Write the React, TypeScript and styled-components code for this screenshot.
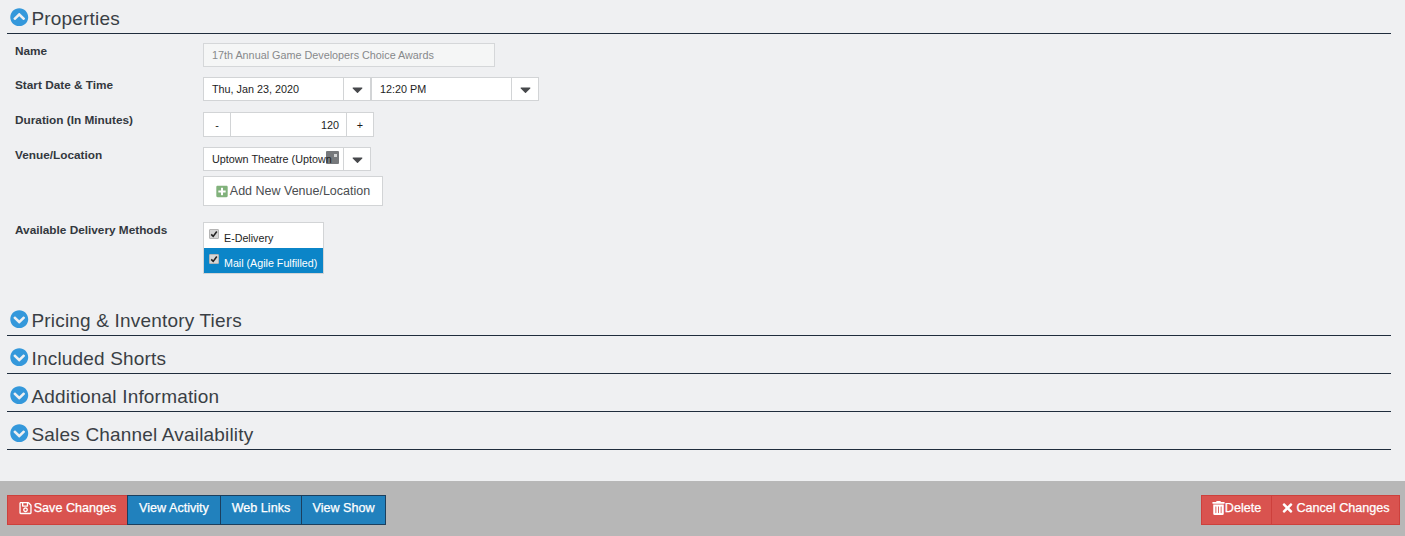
import React from 'react';
import styled, { createGlobalStyle } from 'styled-components';
import {
  FaCaretDown,
  FaChevronCircleDown,
  FaChevronCircleUp,
  FaPlusSquare,
  FaRegSave,
  FaTimes,
  FaTrashAlt,
} from 'react-icons/fa';

const GlobalStyle = createGlobalStyle`
  html, body {
    margin: 0;
    padding: 0;
    background: #eff0f2;
    font-family: "Liberation Sans", Arial, sans-serif;
  }
  * {
    box-sizing: border-box;
  }
`;

const Page = styled.div`
  width: 1405px;
  height: 536px;
  display: flex;
  flex-direction: column;
  overflow: hidden;
`;

const Content = styled.div`
  flex: 1;
  padding: 0 14px 0 7px;
`;

const SectionHeader = styled.div<{ $top: number }>`
  height: 28px;
  margin-top: ${(p) => p.$top}px;
  border-bottom: 1px solid #1f2d3d;
  display: flex;
  align-items: center;
  gap: 3px;
  padding: 0 0 2px 3px;
  color: #3a3f45;
  font-size: 19px;
  line-height: 24px;
  letter-spacing: 0.18px;
  svg {
    width: 18.5px;
    height: 18.5px;
    color: #3498db;
    margin-top: -3px;
  }
`;

const Form = styled.div`
  display: grid;
  grid-template-columns: 188px 1fr;
  padding: 9px 0 0 8px;
`;

const Label = styled.div<{ $top: number }>`
  padding-top: ${(p) => p.$top}px;
  font-size: 11.8px;
  line-height: 14px;
  font-weight: bold;
  color: #33383e;
`;

const Field = styled.div<{ $bottom: number }>`
  display: flex;
  flex-direction: column;
  align-items: flex-start;
  margin-bottom: ${(p) => p.$bottom}px;
`;

const Row = styled.div`
  display: flex;
`;

const ReadOnlyInput = styled.div`
  width: 292px;
  height: 24px;
  padding-left: 8px;
  display: flex;
  align-items: center;
  border: 1px solid #d5d7d9;
  background: #f5f6f6;
  color: #87898b;
  font-size: 10.8px;
`;

const Picker = styled.div<{ $width: number }>`
  position: relative;
  width: ${(p) => p.$width}px;
  height: 24px;
  display: flex;
  background: #fff;
  border: 1px solid #d2d4d6;
  color: #1d1d1d;
  font-size: 10.8px;
`;

const PickerValue = styled.div`
  position: relative;
  z-index: 1;
  flex: 1;
  min-width: 0;
  padding-left: 8px;
  display: flex;
  align-items: center;
  white-space: nowrap;
  overflow: hidden;
`;

const PickerArrow = styled.div`
  width: 27px;
  display: flex;
  align-items: center;
  justify-content: center;
  border-left: 1px solid #d2d4d6;
  color: #47494c;
  svg {
    width: 17px;
    height: 17px;
  }
`;

const AutofillBadge = styled.span`
  position: absolute;
  left: 122px;
  top: 3px;
  width: 13px;
  height: 13px;
  border-radius: 1px;
  background: #77797c;
  &::after {
    content: '';
    position: absolute;
    right: 2px;
    top: 3px;
    width: 3px;
    height: 3px;
    background: #d4d5d6;
  }
`;

const Stepper = styled.div`
  width: 171px;
  height: 25px;
  display: flex;
  background: #fff;
  border: 1px solid #d2d4d6;
  color: #1d1d1d;
  font-size: 10.8px;
`;

const StepButton = styled.div`
  width: 26px;
  display: flex;
  align-items: center;
  justify-content: center;
`;

const StepValue = styled.div`
  flex: 1;
  display: flex;
  align-items: center;
  justify-content: flex-end;
  padding-right: 7px;
  border-left: 1px solid #d2d4d6;
  border-right: 1px solid #d2d4d6;
`;

const AddButton = styled.div`
  width: 180px;
  height: 30px;
  margin-top: 5px;
  display: flex;
  align-items: center;
  justify-content: center;
  gap: 2px;
  background: #fff;
  border: 1px solid #d2d4d6;
  color: #4a4d50;
  font-size: 12.5px;
  svg {
    width: 12px;
    height: 13px;
    color: #82b27c;
  }
`;

const MethodList = styled.div`
  width: 121px;
  border: 1px solid #d2d4d6;
  background: #fff;
`;

const Method = styled.div<{ $selected?: boolean }>`
  height: 25px;
  padding: 4px 0 0 5px;
  display: flex;
  gap: 5px;
  font-size: 10.7px;
  line-height: 22px;
  background: ${(p) => (p.$selected ? '#0b85c8' : '#fff')};
  color: ${(p) => (p.$selected ? '#fff' : '#1d1d1d')};
`;

const Check = styled.span`
  width: 10px;
  height: 10px;
  margin-top: 2px;
  display: flex;
  align-items: center;
  justify-content: center;
  background: #d6d6d6;
  border: 1px solid #b5b5b5;
  border-radius: 1px;
  svg {
    width: 8px;
    height: 8px;
  }
`;

const Footer = styled.div`
  height: 55px;
  padding: 14px 5px 0 7px;
  display: flex;
  justify-content: space-between;
  align-items: flex-start;
  background: #b7b7b7;
`;

const ButtonGroup = styled.div`
  display: flex;
`;

const ActionButton = styled.div<{ $tone: 'red' | 'blue'; $width: number; $gap: number }>`
  width: ${(p) => p.$width}px;
  height: 30px;
  padding-bottom: 4px;
  display: flex;
  align-items: center;
  justify-content: center;
  gap: ${(p) => p.$gap}px;
  color: #fff;
  font-size: 12.6px;
  -webkit-text-stroke: 0.25px #fff;
  background: ${(p) => (p.$tone === 'red' ? '#d9534f' : '#2181bd')};
  border: 1px solid ${(p) => (p.$tone === 'red' ? '#cd403c' : '#1b3f5e')};
  & + & {
    margin-left: -1px;
  }
  svg {
    width: 13px;
    height: 14px;
  }
`;

const CheckMark = () => (
  <svg viewBox="0 0 10 10">
    <path d="M1.5 5.5 L4 8 L8.5 2" fill="none" stroke="#222" strokeWidth="2" />
  </svg>
);

const closedSections = [
  { title: 'Pricing & Inventory Tiers', top: 0 },
  { title: 'Included Shorts', top: 10 },
  { title: 'Additional Information', top: 10 },
  { title: 'Sales Channel Availability', top: 10 },
];

const App = () => (
  <Page>
    <GlobalStyle />
    <Content>
      <SectionHeader $top={6}>
        <FaChevronCircleUp />
        Properties
      </SectionHeader>
      <Form>
        <Label $top={1}>Name</Label>
        <Field $bottom={10}>
          <ReadOnlyInput>17th Annual Game Developers Choice Awards</ReadOnlyInput>
        </Field>
        <Label $top={1}>Start Date &amp; Time</Label>
        <Field $bottom={11}>
          <Row>
            <Picker $width={168}>
              <PickerValue>Thu, Jan 23, 2020</PickerValue>
              <PickerArrow>
                <FaCaretDown />
              </PickerArrow>
            </Picker>
            <Picker $width={168}>
              <PickerValue>12:20 PM</PickerValue>
              <PickerArrow>
                <FaCaretDown />
              </PickerArrow>
            </Picker>
          </Row>
        </Field>
        <Label $top={1}>Duration (In Minutes)</Label>
        <Field $bottom={10}>
          <Stepper>
            <StepButton>-</StepButton>
            <StepValue>120</StepValue>
            <StepButton>+</StepButton>
          </Stepper>
        </Field>
        <Label $top={1}>Venue/Location</Label>
        <Field $bottom={16}>
          <Picker $width={168}>
            <PickerValue>Uptown Theatre (Uptown</PickerValue>
            <AutofillBadge />
            <PickerArrow>
              <FaCaretDown />
            </PickerArrow>
          </Picker>
          <AddButton>
            <FaPlusSquare />
            Add New Venue/Location
          </AddButton>
        </Field>
        <Label $top={1}>Available Delivery Methods</Label>
        <Field $bottom={34}>
          <MethodList>
            <Method>
              <Check>
                <CheckMark />
              </Check>
              E-Delivery
            </Method>
            <Method $selected>
              <Check>
                <CheckMark />
              </Check>
              Mail (Agile Fulfilled)
            </Method>
          </MethodList>
        </Field>
      </Form>
      {closedSections.map((section) => (
        <SectionHeader key={section.title} $top={section.top}>
          <FaChevronCircleDown />
          {section.title}
        </SectionHeader>
      ))}
    </Content>
    <Footer>
      <ButtonGroup>
        <ActionButton $tone="red" $width={121} $gap={2}>
          <FaRegSave />
          Save Changes
        </ActionButton>
        <ActionButton $tone="blue" $width={94} $gap={0}>
          View Activity
        </ActionButton>
        <ActionButton $tone="blue" $width={82} $gap={0}>
          Web Links
        </ActionButton>
        <ActionButton $tone="blue" $width={85} $gap={0}>
          View Show
        </ActionButton>
      </ButtonGroup>
      <ButtonGroup>
        <ActionButton $tone="red" $width={71} $gap={0}>
          <FaTrashAlt />
          Delete
        </ActionButton>
        <ActionButton $tone="red" $width={129} $gap={2}>
          <FaTimes />
          Cancel Changes
        </ActionButton>
      </ButtonGroup>
    </Footer>
  </Page>
);

export default App;
